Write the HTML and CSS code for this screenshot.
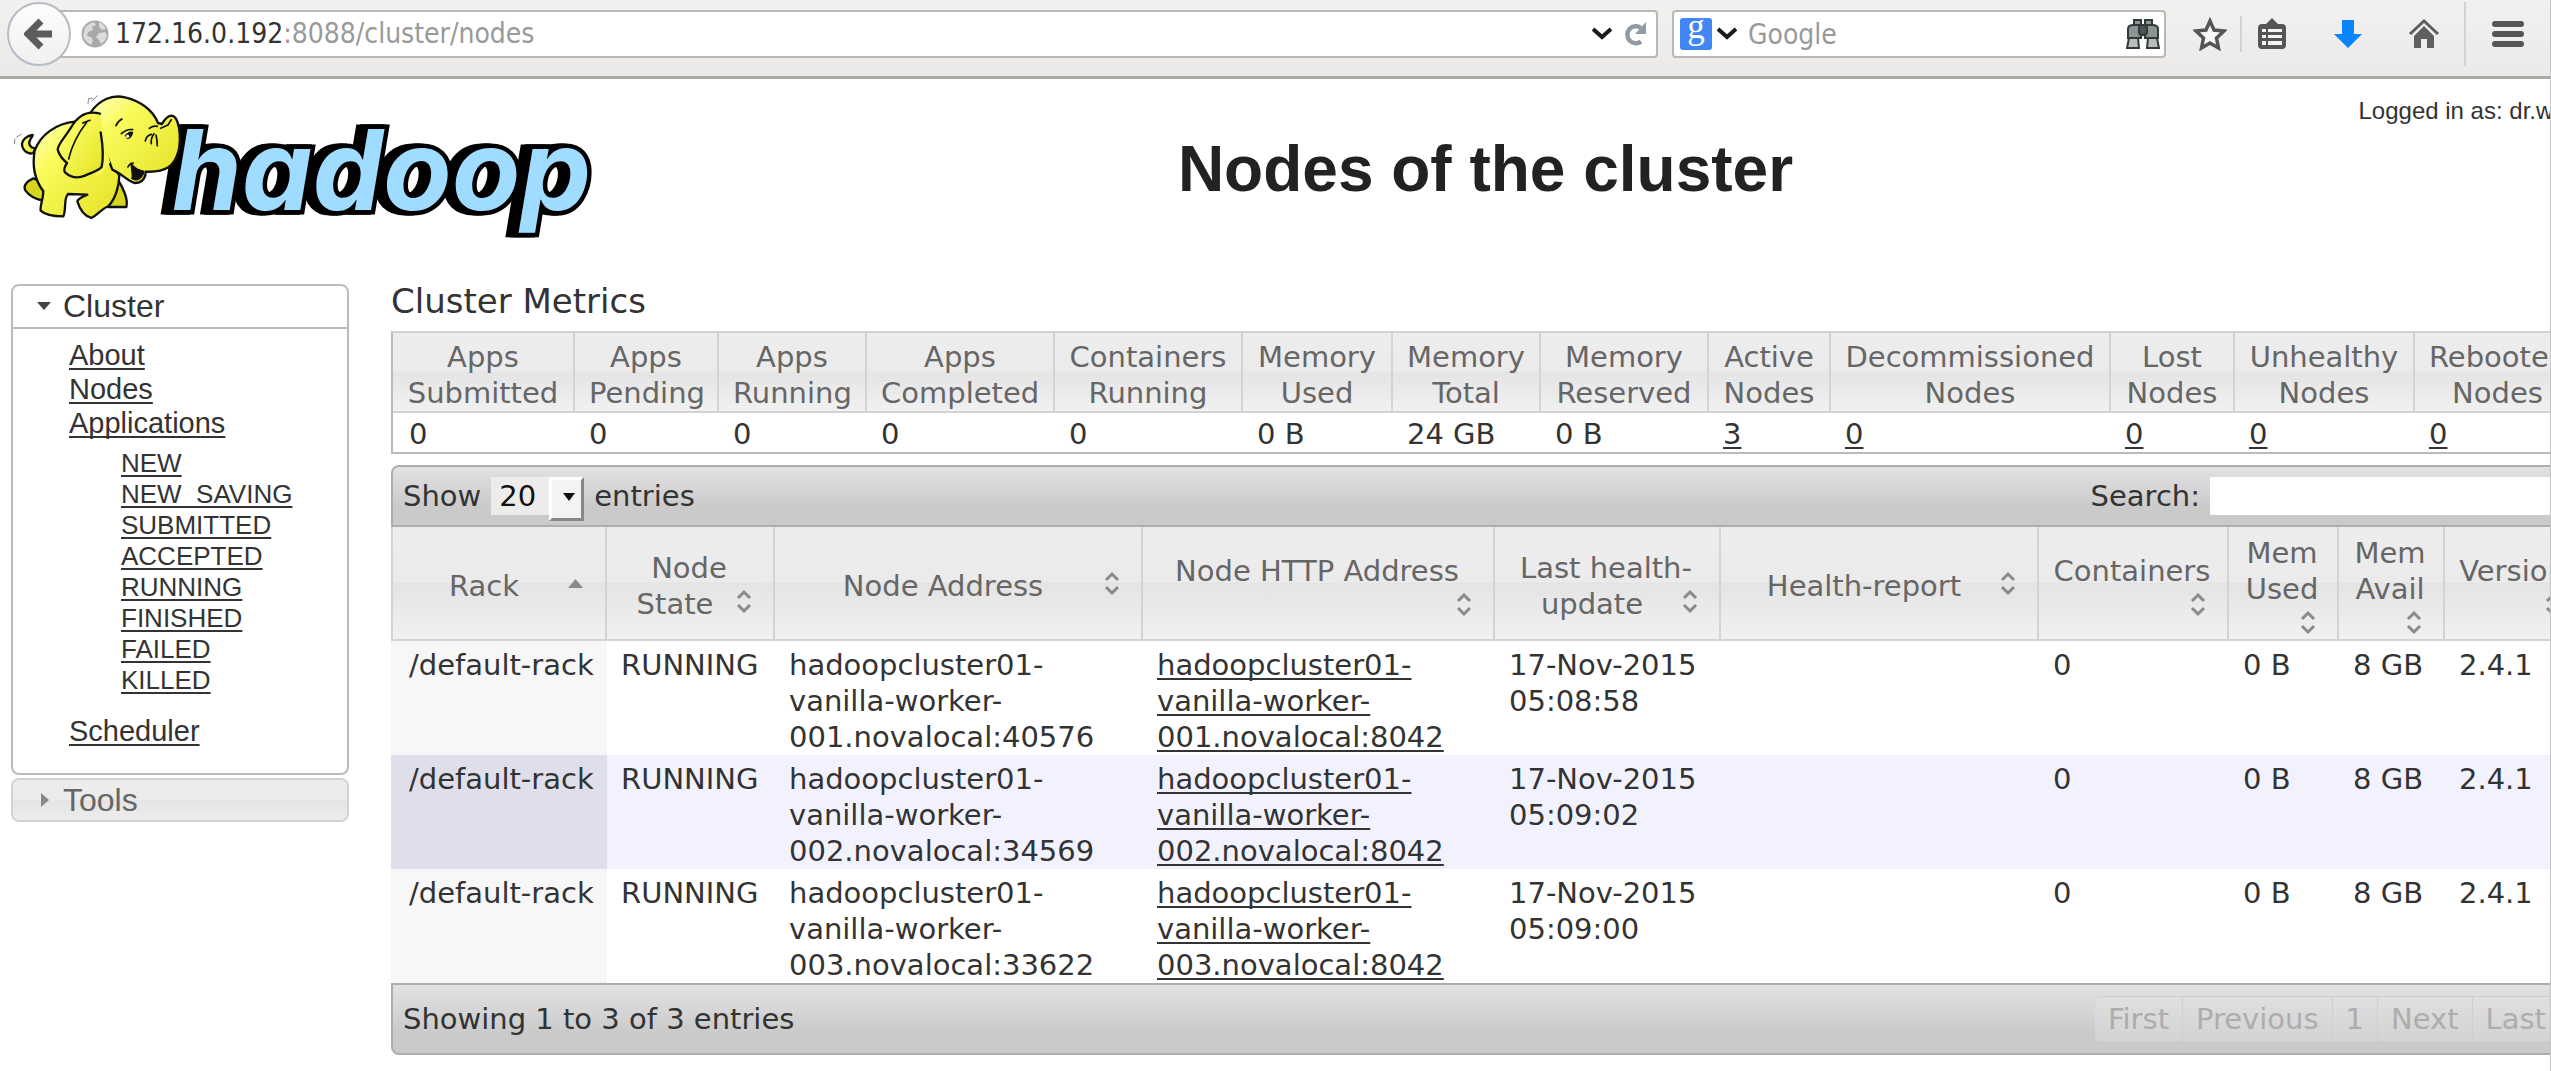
FILE: index.html
```html
<!DOCTYPE html>
<html lang="en">
<head>
<meta charset="utf-8">
<title>Nodes of the cluster</title>
<link rel="stylesheet" href="styles.css">
</head>
<body>
<div class="window">
  <nav class="toolbar" aria-label="Browser">
    <button class="back" type="button" aria-label="Back">
      <svg width="30" height="32" viewBox="0 0 30 32"><path d="M17 3 4 16l13 13M5 16h23" fill="none" stroke="#5c5c5c" stroke-width="7"/></svg>
    </button>
    <div class="field address">
      <svg width="28" height="28" viewBox="0 0 28 28"><circle cx="14" cy="14" r="13.500" fill="#a9a9a9"/><path d="M4 8q4-5 9-6l2 3-4 2 1 3-5 2-1 4 4 1 2 4-2 4q-6-3-8-9zM18 2q5 2 7 7l-4 1-3-3zM18 13l6-1 2 3q-1 6-6 9l-2-4-3-3z" fill="#dcdcdc"/></svg>
      <span class="url"><span class="host">172.16.0.192</span>:8088/cluster/nodes</span>
      <button class="plain" type="button" aria-label="History"><svg width="20" height="14" viewBox="0 0 20 14"><path d="m1 2 9 8 9-8" fill="none" stroke="#1a1a1a" stroke-width="4"/></svg></button>
      <button class="plain" type="button" aria-label="Reload"><svg width="24" height="24" viewBox="0 0 24 24"><path d="M17 19.500A8.500 8.500 0 1 1 17 6" fill="none" stroke="#919ba5" stroke-width="4.500"/><path d="M22 0v12H11z" fill="#919ba5"/></svg></button>
    </div>
    <div class="field finder">
      <svg width="32" height="32" viewBox="0 0 32 32"><rect width="32" height="32" rx="3" fill="#4285f4"/><text x="16" y="20" text-anchor="middle" class="g-mark">g</text></svg>
      <button class="plain" type="button" aria-label="Search engine"><svg width="20" height="14" viewBox="0 0 20 14"><path d="m1 2 9 8 9-8" fill="none" stroke="#1a1a1a" stroke-width="4"/></svg></button>
      <input class="finder-input" type="text" placeholder="Google" aria-label="Web search">
      <button class="plain" type="button" aria-label="Find"><svg width="34" height="32" viewBox="0 0 34 32"><g fill="#8d948f" stroke="#2f3a3c" stroke-width="2"><rect x="8" y="2" width="7" height="8"/><rect x="19" y="2" width="7" height="8"/><path d="M2 11q0-4 6-4h7v13H2zM32 11q0-4-6-4h-7v13h13z"/><path d="M3 20h9l1 10H1zM31 20h-9l-1 10h12z" fill="#b9beb9"/><rect x="13" y="7" width="8" height="10" rx="3" fill="#4c5655"/></g></svg></button>
    </div>
    <button class="tool" type="button" aria-label="Bookmark"><svg width="34" height="34" viewBox="0 0 34 34"><path d="m17 4 4 9 10 1-7.500 7 2 10L17 26l-8.500 5 2-10L3 14l10-1z" fill="#fafafa" stroke="#555" stroke-width="3.500"/></svg></button>
    <span class="rule"></span>
    <button class="tool" type="button" aria-label="Bookmarks list"><svg width="28" height="32" viewBox="0 0 28 32"><path d="M8 6 14 0l6 6h4q4 0 4 4v17q0 4-4 4H4q-4 0-4-4V10q0-4 4-4z" fill="#555"/><path d="M4 11h4v3H4zM10 11h14v3H10zM4 17h4v3H4zM10 17h14v3H10zM4 23h4v4H4zM10 23h14v4H10z" fill="#f4f4f4"/></svg></button>
    <button class="tool tool-gap" type="button" aria-label="Downloads"><svg width="28" height="28" viewBox="0 0 28 28"><path d="M8 0h12v14h8L14 28 0 14h8z" fill="#0a84ff"/></svg></button>
    <button class="tool tool-gap" type="button" aria-label="Home"><svg width="32" height="30" viewBox="0 0 32 30"><path d="M2 15 16 2l14 13" fill="none" stroke="#5f5f5f" stroke-width="3"/><path d="M6 17 16 7l10 10v12h-7v-9h-6v9H6z" fill="#5f5f5f"/></svg></button>
    <span class="rule rule-tall"></span>
    <button class="tool tool-menu" type="button" aria-label="Menu"><svg width="32" height="26" viewBox="0 0 32 26"><path d="M3 3h26M3 13h26M3 23h26" stroke="#555" stroke-width="6" stroke-linecap="round"/></svg></button>
  </nav>

  <div class="page">
    <header class="masthead">
      <a class="logo" href="#" aria-label="Hadoop">
        <svg width="640" height="170" viewBox="0 0 640 170">
          <defs>
            <linearGradient id="hide" x1="0" y1="0" x2="1" y2="1"><stop offset="0" stop-color="#ffffc8"/><stop offset=".3" stop-color="#f9fb5c"/><stop offset="1" stop-color="#e3e224"/></linearGradient>
          </defs>
          <text class="wordmark" x="172" y="131">hadoop</text>
          <g transform="scale(.3333)" stroke="#111" stroke-width="7" stroke-linejoin="round" stroke-linecap="round" fill="url(#hide)">
            <path d="M100 298C84 305 68 318 76 334 90 354 112 362 132 366l10-50zM352 300c14 20 34 60 27 84h-54z" fill="#d6d61f"/>
            <path d="M106 208c-16-2-22-14-16-24 2-6 6-8 8-16-16 2-30 12-32 26 0 18 16 34 34 28z"/>
            <path d="M225 128C170 133 122 166 104 215c-8 46 2 90 26 122 0 24-10 40-8 58 14 14 42 17 68 17 10-24 0-52 14-67l58 2c-14 6-28 12-30 20 8 26 22 44 42 50 18-8 28-26 52-36 20-22 32-60 32-92l-50-70z"/>
            <path d="M272 100C298 62 336 46 375 55c44 10 84 38 99 77l12 3c8-14 18-25 29-25 14 2 18 18 22 36 8 52-2 98-32 119-18 12-44 14-68 13 0 22-14 34-32 34-22-4-32-24-68-40z"/>
            <path d="M240 130 300 104 330 250 300 290 230 270z" stroke="none" fill="#f6f750"/>
            <path d="M395 258c2 20 6 36 2 40 14 8 30-2 33-20-12-2-24-8-35-20z" fill="#111"/>
            <path d="M300 104c-36-10-66 6-86 40-18 30-40 50-41 68 6 20 18 32 28 40-8 12-10 22-6 28 20 18 40 18 60 10 20-10 40-14 50-26 8-36 2-74-3-104"/>
            <g fill="none" stroke-width="5"><path d="M206 240c8-34 28-76 54-110M248 132l22-8M348 140c4-10 10-16 18-20M364 164c12-10 24-14 34-12M448 148c8-6 16-8 24-6M436 186c2-12 10-18 18-20M454 194c-2-14 2-22 8-30M472 200c0-16-2-24-4-32M482 148l22-10 10-16M384 264c4-8 10-12 16-12"/><path d="M264 74l2-16h12M276 66l16-16M44 180v14M50 174l14-8" stroke="#888" stroke-width="3"/></g>
            <path d="M374 170q16-18 26-10-6 22-18 20z" fill="#111" stroke="none"/><circle cx="383" cy="172" r="5" fill="#fff" stroke="none"/>
          </g>
        </svg>
      </a>
      <div class="heading">
        <p class="login">Logged in as: dr.who</p>
        <h1 class="title">Nodes of the cluster</h1>
      </div>
    </header>

    <div class="body">
      <aside class="sidebar">
        <section class="panel">
          <h3 class="panel-head"><svg width="14" height="8" viewBox="0 0 14 8"><path d="M0 0h14L7 8z" fill="#444"/></svg>Cluster</h3>
          <ul class="links">
            <li><a href="#">About</a></li>
            <li><a href="#">Nodes</a></li>
            <li><a href="#">Applications</a>
              <ul class="states">
                <li><a href="#">NEW</a></li>
                <li><a href="#">NEW_SAVING</a></li>
                <li><a href="#">SUBMITTED</a></li>
                <li><a href="#">ACCEPTED</a></li>
                <li><a href="#">RUNNING</a></li>
                <li><a href="#">FINISHED</a></li>
                <li><a href="#">FAILED</a></li>
                <li><a href="#">KILLED</a></li>
              </ul>
            </li>
            <li><a href="#">Scheduler</a></li>
          </ul>
        </section>
        <section class="panel panel-closed">
          <h3 class="panel-head"><svg width="14" height="14" viewBox="0 0 14 14"><path d="M4 0v14l8-7z" fill="#888"/></svg>Tools</h3>
        </section>
      </aside>

      <main class="main">
        <h2 class="subtitle">Cluster Metrics</h2>
        <table class="metrics">
          <colgroup><col class="w182"><col class="w144"><col class="w148"><col class="w188"><col class="w188"><col class="w150"><col class="w148"><col class="w168"><col class="w122"><col class="w280"><col class="w124"><col class="w180"><col></colgroup>
          <thead><tr><th>Apps Submitted</th><th>Apps Pending</th><th>Apps Running</th><th>Apps Completed</th><th>Containers Running</th><th>Memory Used</th><th>Memory Total</th><th>Memory Reserved</th><th>Active Nodes</th><th>Decommissioned Nodes</th><th>Lost Nodes</th><th>Unhealthy Nodes</th><th>Rebooted Nodes</th></tr></thead>
          <tbody><tr><td>0</td><td>0</td><td>0</td><td>0</td><td>0</td><td>0 B</td><td>24 GB</td><td>0 B</td><td><a href="#">3</a></td><td><a href="#">0</a></td><td><a href="#">0</a></td><td><a href="#">0</a></td><td><a href="#">0</a></td></tr></tbody>
        </table>

        <div class="bar bar-top">
          <label class="length">Show
            <span class="picker"><select><option>20</option><option>40</option><option>60</option></select></span>
            entries</label>
          <label class="search">Search: <input type="text"></label>
        </div>
        <table class="nodes">
          <colgroup><col class="w216"><col class="w168"><col class="w368"><col class="w352"><col class="w226"><col class="w318"><col class="w190"><col class="w110"><col class="w106"><col></colgroup>
          <thead><tr>
            <th><div class="sort">Rack<svg class="arrows" viewBox="0 0 28 30"><path d="M6 20h15l-7.500-9z" fill="#8a8a8a"/></svg></div></th>
            <th><div class="sort">Node State<svg class="arrows" viewBox="0 0 28 30"><path d="m8 12 6-6 6 6M8 19l6 6 6-6"/></svg></div></th>
            <th><div class="sort">Node Address<svg class="arrows" viewBox="0 0 28 30"><path d="m8 12 6-6 6 6M8 19l6 6 6-6"/></svg></div></th>
            <th><div class="sort">Node HTTP Address<br><svg class="arrows" viewBox="0 0 28 30"><path d="m8 12 6-6 6 6M8 19l6 6 6-6"/></svg></div></th>
            <th><div class="sort">Last health-update<svg class="arrows" viewBox="0 0 28 30"><path d="m8 12 6-6 6 6M8 19l6 6 6-6"/></svg></div></th>
            <th><div class="sort">Health-report<svg class="arrows" viewBox="0 0 28 30"><path d="m8 12 6-6 6 6M8 19l6 6 6-6"/></svg></div></th>
            <th><div class="sort">Containers<svg class="arrows" viewBox="0 0 28 30"><path d="m8 12 6-6 6 6M8 19l6 6 6-6"/></svg></div></th>
            <th><div class="sort">Mem Used<svg class="arrows" viewBox="0 0 28 30"><path d="m8 12 6-6 6 6M8 19l6 6 6-6"/></svg></div></th>
            <th><div class="sort">Mem Avail<svg class="arrows" viewBox="0 0 28 30"><path d="m8 12 6-6 6 6M8 19l6 6 6-6"/></svg></div></th>
            <th><div class="sort">Version<svg class="arrows" viewBox="0 0 28 30"><path d="m8 12 6-6 6 6M8 19l6 6 6-6"/></svg></div></th>
          </tr></thead>
          <tbody>
            <tr><td>/default-rack</td><td>RUNNING</td><td>hadoopcluster01-vanilla-worker-001.novalocal:40576</td><td><a href="#">hadoopcluster01-vanilla-worker-001.novalocal:8042</a></td><td>17-Nov-2015 05:08:58</td><td></td><td>0</td><td>0 B</td><td>8 GB</td><td>2.4.1</td></tr>
            <tr><td>/default-rack</td><td>RUNNING</td><td>hadoopcluster01-vanilla-worker-002.novalocal:34569</td><td><a href="#">hadoopcluster01-vanilla-worker-002.novalocal:8042</a></td><td>17-Nov-2015 05:09:02</td><td></td><td>0</td><td>0 B</td><td>8 GB</td><td>2.4.1</td></tr>
            <tr><td>/default-rack</td><td>RUNNING</td><td>hadoopcluster01-vanilla-worker-003.novalocal:33622</td><td><a href="#">hadoopcluster01-vanilla-worker-003.novalocal:8042</a></td><td>17-Nov-2015 05:09:00</td><td></td><td>0</td><td>0 B</td><td>8 GB</td><td>2.4.1</td></tr>
          </tbody>
        </table>
        <div class="bar bar-bottom">
          <span>Showing 1 to 3 of 3 entries</span>
          <div class="pager"><button type="button">First</button><button type="button">Previous</button><button type="button">1</button><button type="button">Next</button><button type="button">Last</button></div>
        </div>
      </main>
    </div>
  </div>
</div>
</body>
</html>
```
FILE: styles.css
```css
* { box-sizing: border-box; }

body {
  margin: 0;
  background: #fff;
  color: #333;
  font: 29px/36px "DejaVu Sans", sans-serif;
}

h1, h2, h3, p, ul { margin: 0; padding: 0; font-weight: normal; }
ul { list-style: none; }
svg { display: block; flex: none; }
button, input, select { font: inherit; color: inherit; margin: 0; }

a {
  color: inherit;
  text-decoration: underline 2px;
  text-underline-offset: 3px;
  text-decoration-skip-ink: none;
}

.window {
  overflow: hidden;
  min-height: 100vh;
  border-right: 1px solid #c4c4c4;
}

/* Browser toolbar */
.toolbar {
  display: flex;
  align-items: center;
  height: 79px;
  padding: 0 0 8px 7px;
  background: linear-gradient(#f2f1f0, #ebeae9);
  border-bottom: 3px solid #aaa9a6;
  font-family: "DejaVu Sans Condensed", "DejaVu Sans", sans-serif;
  font-size: 28px;
}

.toolbar button { border: 0; padding: 0; background: none; }

.toolbar .back {
  position: relative;
  z-index: 1;
  display: grid;
  place-items: center;
  flex: none;
  width: 64px;
  height: 64px;
  border: 2px solid #b4bcc6;
  border-radius: 50%;
  background: linear-gradient(#fdfdfd, #f0f0f0);
}

.field {
  display: flex;
  align-items: center;
  height: 48px;
  border: 2px solid #bbb8b3;
  border-radius: 4px;
  background: #fff;
}

.address { flex: 1; gap: 12px; margin-left: -16px; padding: 0 8px 0 24px; }
.url { flex: 1; margin-left: -6px; color: #999; white-space: nowrap; }
.host { color: #333; }
.finder { flex: none; width: 494px; margin-left: 14px; padding: 0 4px 0 6px; gap: 5px; }
.finder-input { flex: 1; min-width: 0; height: 40px; border: 0; padding: 0 6px; outline: 0; background: none; }
.finder-input::placeholder { color: #999; opacity: 1; }
.g-mark { font: 35px "Liberation Serif", serif; fill: #fff; }

.tool { display: grid; place-items: center; flex: none; width: 60px; height: 48px; }
.field + .tool { margin-left: 14px; }
.tool-gap { margin-left: 16px; }
.toolbar .tool-menu { width: 84px; }
.rule { flex: none; width: 2px; height: 36px; background: #cdd3d9; }
.rule-tall { height: 64px; margin-left: 10px; }

/* Page: the tables run past the right edge of the window */
.page { margin-right: -34px; }

.masthead, .body { display: grid; grid-template-columns: 391px minmax(0, 1fr); }
.masthead { height: 202px; font-family: "Liberation Sans", Arial, sans-serif; }
.logo { width: 640px; }
.heading { padding: 18px 4px 0 0; }
.login { font-size: 24px; line-height: 28px; text-align: right; }
.title { margin-top: 8px; font-size: 64px; line-height: 72px; font-weight: bold; text-align: center; color: #222; }

.wordmark {
  font: italic bold 112px Inter, "Liberation Sans", sans-serif;
  fill: #9fdcff;
  stroke: #000;
  stroke-width: 9px;
  paint-order: stroke;
  filter: drop-shadow(-4px 0 0 #000) drop-shadow(-4px 0 0 #000);
}

/* Sidebar */
.sidebar {
  padding: 3px 42px 0 11px;
  font-family: "Liberation Sans", Arial, sans-serif;
  line-height: 34px;
}

.panel { border: 2px solid #bbb; border-radius: 8px; margin-bottom: 3px; }

.panel-head {
  display: flex;
  align-items: center;
  gap: 12px;
  padding: 2px 0 3px 24px;
  border-bottom: 2px solid #bbb;
  font-size: 32px;
  line-height: 36px;
}

.links { padding: 9px 0 25px 56px; }
.states { margin: 8px 0 18px; padding-left: 52px; font-size: 26px; line-height: 31px; }

.panel-closed {
  border-color: #d3d3d3;
  background: linear-gradient(#ededed, #ebebeb 49%, #e4e4e4 50%, #ededed);
  color: #666;
}

.panel-closed .panel-head { padding-bottom: 2px; border: 0; }

/* Tables */
.subtitle { margin-bottom: 10px; font-size: 34px; line-height: 40px; }

table { width: 100%; table-layout: fixed; border-spacing: 0; }

th {
  padding: 6px 14px 0;
  border-right: 2px solid #d3d3d3;
  border-bottom: 2px solid #d3d3d3;
  background: linear-gradient(#ededed, #ebebeb 49%, #e4e4e4 50%, #f1f1f1);
  color: #666;
  font-weight: normal;
}

td { text-align: left; vertical-align: top; }

.metrics { margin-bottom: 11px; border: 2px solid #bbb; border-top-color: #d3d3d3; }
.metrics td { padding: 3px 14px 0; }
.metrics td:first-child { padding-left: 16px; }

.nodes th { padding: 8px 15px 2px 13px; }
.nodes th:first-child { border-left: 2px solid #d3d3d3; }
.nodes td { padding: 6px 14px 0; }
.nodes td:first-child { padding: 6px 0 0 18px; background: #f7f7f7; white-space: nowrap; }
.nodes td:nth-child(n+7) { white-space: nowrap; }
.nodes tr:nth-child(even) td { background: #f2f2ff; }
.nodes tr:nth-child(even) td:first-child { background: #dedfea; }

.sort { display: flow-root; }
.arrows { float: right; width: 28px; height: 30px; fill: none; stroke: #8a8a8a; stroke-width: 3px; }
.arrows [fill] { stroke: none; }

.w106 { width: 106px; }
.w110 { width: 110px; }
.w122 { width: 122px; }
.w124 { width: 124px; }
.w144 { width: 144px; }
.w148 { width: 148px; }
.w150 { width: 150px; }
.w168 { width: 168px; }
.w180 { width: 180px; }
.w182 { width: 182px; }
.w188 { width: 188px; }
.w190 { width: 190px; }
.w216 { width: 216px; }
.w226 { width: 226px; }
.w280 { width: 280px; }
.w318 { width: 318px; }
.w352 { width: 352px; }
.w368 { width: 368px; }

/* Bars above and below the node table */
.bar {
  display: flex;
  align-items: center;
  justify-content: space-between;
  padding: 10px;
  border: 2px solid #aeaeae;
  background: linear-gradient(#e2e2e2, #cacaca 70%, #cacaca);
}

.bar-top { border-radius: 8px 8px 0 0; }
.bar-bottom { padding: 11px 22px 11px 10px; border-radius: 0 0 8px 8px; }

.length, .search { display: flex; align-items: center; gap: 10px; }

.picker { position: relative; width: 93px; height: 38px; }

.picker select {
  width: 100%;
  height: 38px;
  padding: 0 8px;
  border: 0;
  border-radius: 0;
  appearance: none;
  background: #edecea;
  color: #111;
}

.picker::before {
  content: "";
  position: absolute;
  top: 0;
  right: 0;
  width: 29px;
  height: 38px;
  border: 3px solid;
  border-color: #fff #888 #888 #fff;
  background: #f4f3f2;
  pointer-events: none;
}

.picker::after {
  content: "";
  position: absolute;
  top: 16px;
  right: 9px;
  border: 6px solid transparent;
  border-top: 8px solid #111;
  border-bottom: 0;
  pointer-events: none;
}

.search input { width: 362px; height: 38px; padding: 0 6px; border: 0; background: #fff; }

.pager { display: flex; }

.pager button {
  height: 46px;
  padding: 0 13px;
  border: solid #cfcfcf;
  border-width: 1px 1px 1px 0;
  background: linear-gradient(#dfdfdf, #d3d3d3);
  color: #adadad;
}

.pager button:first-child { border-radius: 6px 0 0 6px; }
```
